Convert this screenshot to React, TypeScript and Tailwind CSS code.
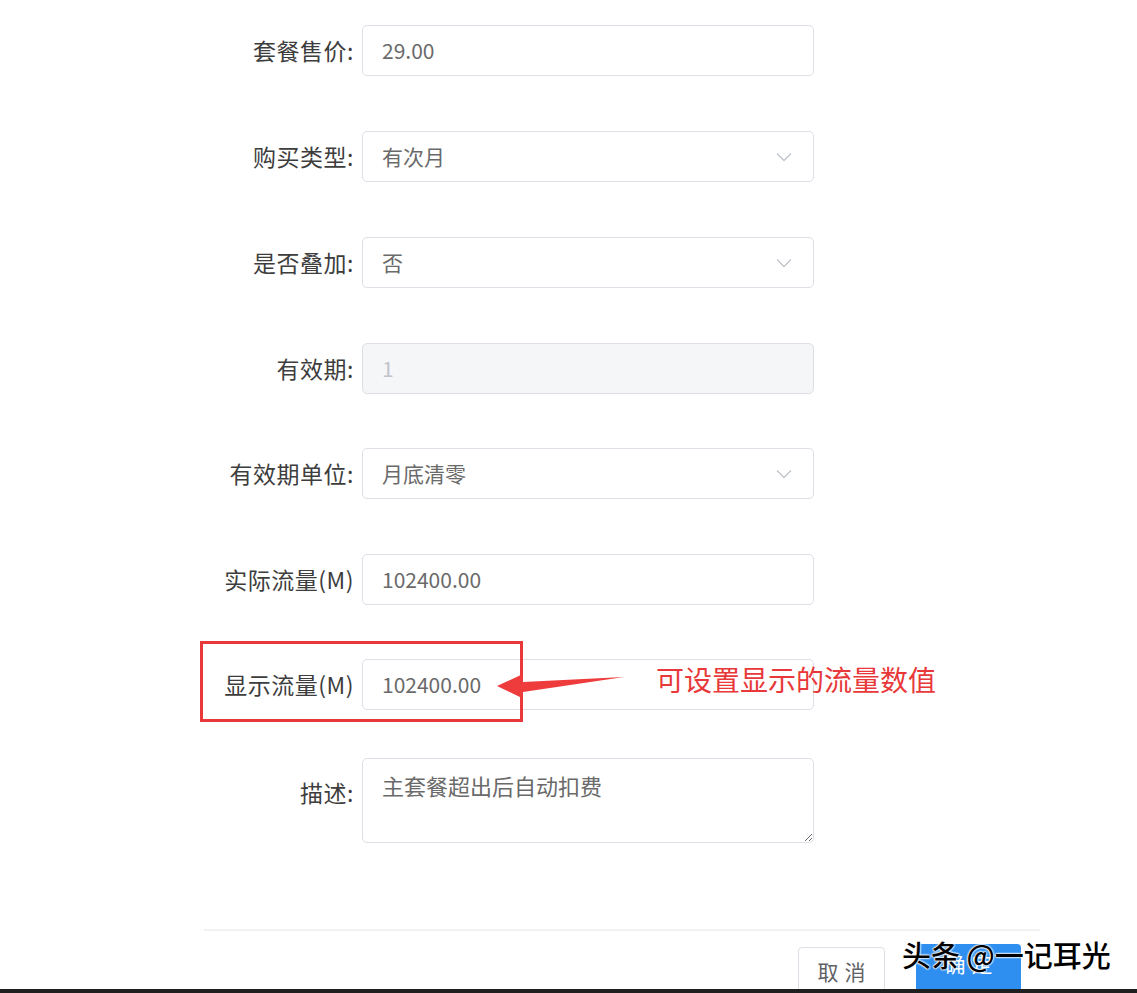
import React from "react";

const font = { fontFamily: '"Noto Sans CJK SC", "Noto Sans", sans-serif' };

function Chevron() {
  return (
    <svg width="16" height="10" viewBox="0 0 16 10" className="shrink-0">
      <path d="M1 1.5 L8 8.5 L15 1.5" fill="none" stroke="#c0c4cc" strokeWidth="1.3" />
    </svg>
  );
}

function Row({ label, children, mt }: { label: string; children: React.ReactNode; mt?: string }) {
  return (
    <div className={`flex items-center h-[51px] ${mt ?? ""}`}>
      <div className="w-[152px] pr-[3px] text-right text-[23px] tracking-[0.5px] text-[#3d3d3d] whitespace-nowrap">{label}</div>
      <div className="ml-[5px] w-[452px] h-full">{children}</div>
    </div>
  );
}

function Input({ value, disabled }: { value: string; disabled?: boolean }) {
  return (
    <div
      className={`h-full flex items-center px-[19px] rounded-[5px] border border-[#dcdfe6] text-[21px] ${
        disabled ? "bg-[#f5f6f7] text-[#c0c4cc]" : "bg-white text-[#6a6a6a]"
      }`}
    >
      {value}
    </div>
  );
}

function Select({ value }: { value: string }) {
  return (
    <div className="h-full flex items-center justify-between pl-[19px] pr-[21px] rounded-[5px] border border-[#dcdfe6] bg-white text-[21px] text-[#6a6a6a]">
      <span>{value}</span>
      <Chevron />
    </div>
  );
}

export default function App() {
  return (
    <div className="relative w-[1137px] h-[993px] bg-white overflow-hidden" style={font}>
      {/* form */}
      <div className="pt-[25px] pl-[205px] flex flex-col">
        <Row label="套餐售价:">
          <Input value="29.00" />
        </Row>
        <Row label="购买类型:" mt="mt-[55px]">
          <Select value="有次月" />
        </Row>
        <Row label="是否叠加:" mt="mt-[55px]">
          <Select value="否" />
        </Row>
        <Row label="有效期:" mt="mt-[55px]">
          <Input value="1" disabled />
        </Row>
        <Row label="有效期单位:" mt="mt-[54px]">
          <Select value="月底清零" />
        </Row>
        <Row label="实际流量(M)" mt="mt-[55px]">
          <Input value="102400.00" />
        </Row>
        <Row label="显示流量(M)" mt="mt-[54px]">
          <Input value="102400.00" />
        </Row>

        <div className="flex mt-[48px]">
          <div className="w-[152px] pr-[3px] pt-[17px] text-right text-[23px] tracking-[0.5px] text-[#3d3d3d]">描述:</div>
          <textarea
            readOnly
            defaultValue="主套餐超出后自动扣费"
            className="ml-[5px] w-[452px] h-[85px] px-[19px] py-[11px] rounded-[5px] border border-[#dcdfe6] text-[22px] leading-[30px] text-[#6a6a6a] outline-none resize-y"
            style={font}
          />
        </div>
      </div>

      {/* footer */}
      <div className="mt-[86px] ml-[204px] w-[836px] border-t-2 border-[#f2f2f2]">
        <div className="flex justify-end gap-[31px] pr-[19px] pt-[16px]">
          <button className="w-[87px] h-[50px] rounded-[4px] border border-[#dcdfe6] bg-white text-[21px] text-[#606266] tracking-[6px] pl-[6px]" style={font}>
            取消
          </button>
          <button className="w-[105px] h-[52px] -mt-[3px] rounded-[4px] bg-[#2f8ff0] text-[21px] text-white tracking-[6px] pl-[6px] flex justify-center pt-[4px]" style={font}>
            确定
          </button>
        </div>
      </div>

      {/* annotation: red box */}
      <div className="absolute left-[200px] top-[641px] w-[323px] h-[81px] border-[3px] border-[#e8383a]" />

      {/* annotation: arrow */}
      <svg className="absolute left-[490px] top-[668px]" width="140" height="36" viewBox="0 0 140 36">
        <polygon points="7,18 33,6 33,14 134,9 33,24 32,30" fill="#ee3b3b" />
      </svg>

      {/* annotation: text */}
      <div className="absolute left-[656px] top-[660px] text-[28px] leading-[38px] text-[#e8383a] whitespace-nowrap">
        可设置显示的流量数值
      </div>

      {/* watermark */}
      <div
        className="absolute left-[902px] top-[936px] text-[29px] leading-[36px] font-medium text-black whitespace-nowrap"
        style={{ textShadow: "0 0 2px #fff, 0 0 2px #fff, 0 0 2px #fff, 0 0 2px #fff" }}
      >
        头条 @一记耳光
      </div>

      {/* bottom dark bar */}
      <div className="absolute left-0 bottom-0 w-full h-[4px] bg-[#1f1f1f]" />
    </div>
  );
}
